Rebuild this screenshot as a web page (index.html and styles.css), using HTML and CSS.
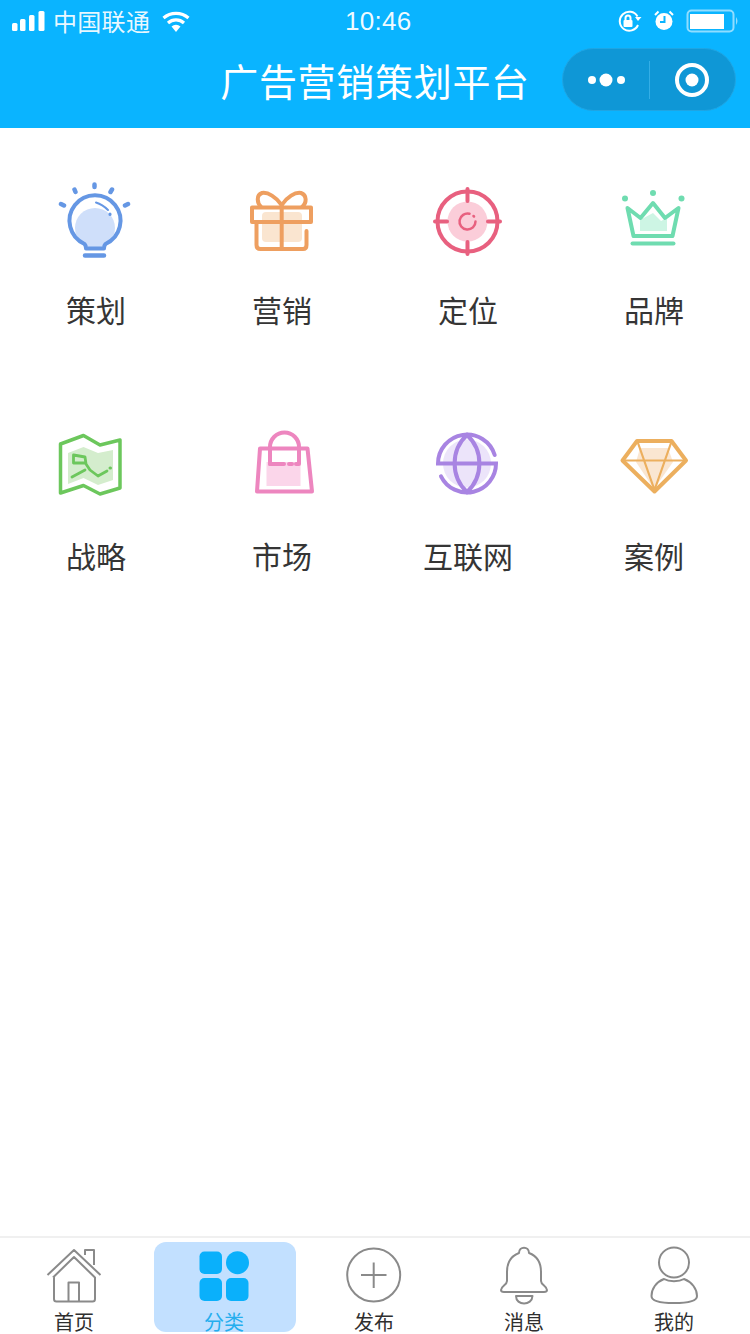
FILE: index.html
```html
<!DOCTYPE html>
<html lang="zh-CN">
<head>
<meta charset="utf-8">
<title>广告营销策划平台</title>
<link rel="stylesheet" href="styles.css">
</head>
<body>
<div class="app">
  <header class="header">
    <div class="status">
      <div class="status-left">
        <svg class="signal" width="34" height="22" viewBox="12 9 34 22"><rect x="12" y="22" width="5.5" height="8" rx="1.5"/><rect x="20" y="18" width="5.5" height="12" rx="1.5"/><rect x="29" y="14" width="5.5" height="16" rx="1.5"/><rect x="38.5" y="10" width="6" height="20" rx="1.5"/></svg>
        <span class="carrier">中国联通</span>
        <svg class="wifi" width="30" height="22" viewBox="162 9 30 22"><path class="wifi-arc" d="M164.5 17 A19 19 0 0 1 189.5 17"/><path class="wifi-arc" d="M169 22 A12 12 0 0 1 185 22"/><path class="wifi-dot" d="M172.5 25.5 A7 7 0 0 1 181.5 25.5 L177 31 Z"/></svg>
      </div>
      <span class="time">10:46</span>
      <div class="status-right">
        <svg class="lock" width="24" height="22" viewBox="619 9 24 22"><path class="thin" d="M639 24 A9.5 9.5 0 1 1 638.5 15.5"/><path class="solid" d="M636 16 L642.5 16 L639 20 Z"/><rect class="solid" x="624.5" y="19" width="9" height="7" rx="1"/><path class="thin" d="M626.5 19 V17 A2.5 2.5 0 0 1 631.5 17 V19"/></svg>
        <svg class="alarm" width="22" height="22" viewBox="653 9 22 22"><circle class="solid" cx="664" cy="20.5" r="8.5"/><path class="hand" d="M664.5 15 V21 H660"/><path class="thin" d="M655 14 L658.5 10.5 M673 14 L669.5 10.5"/></svg>
        <svg class="battery" width="54" height="24" viewBox="686 8 54 24"><rect class="batt-case" x="687.5" y="9.5" width="46" height="21" rx="4"/><rect class="solid" x="690" y="13" width="34" height="15"/><path class="batt-tip" d="M736 16 Q739 20 736 24 Z"/></svg>
      </div>
    </div>
    <div class="nav">
      <h1 class="title">广告营销策划平台</h1>
      <div class="capsule">
        <div class="capsule-part">
          <svg width="40" height="20" viewBox="587 70 40 20"><circle class="solid" cx="593" cy="80" r="4"/><circle class="solid" cx="607" cy="80" r="6.5"/><circle class="solid" cx="622" cy="80" r="4"/></svg>
        </div>
        <div class="capsule-part">
          <svg width="40" height="40" viewBox="672 60 40 40"><circle class="ring" cx="692" cy="80" r="15"/><circle class="solid" cx="692" cy="80" r="6.5"/></svg>
        </div>
      </div>
    </div>
  </header>

  <main class="grid">
    <a class="cell">
      <svg class="icon" viewBox="56 180 80 80">
        <circle fill="#cfdffa" cx="95" cy="228" r="20"/>
        <g fill="none" stroke="#6597e4" stroke-width="4" stroke-linecap="round" stroke-linejoin="round">
          <path d="M84.500 244 A25.500 25.500 0 1 1 105.500 244 C104.500 245 104 246.500 104 248.500 H86 C86 246.500 85.500 245 84.500 244 Z"/>
          <path stroke-width="4.500" d="M85 255.500 H104 M94.500 184.500 V187 M74.500 189.500 L75.500 192 M110.500 192 L112 189.500 M61 204 L64 205.500 M125 205.500 L128 204"/>
          <path stroke-width="2" d="M96 202.500 C101 204 105 207 108 210"/>
          <path stroke-width="3" d="M110 214 V214.500"/>
        </g>
      </svg>
      <span class="label">策划</span>
    </a>
    <a class="cell">
      <svg class="icon" viewBox="242 180 80 80">
        <rect fill="#fae5d0" x="262" y="212" width="40" height="30" rx="4"/>
        <g fill="none" stroke="#ee9f60" stroke-width="4" stroke-linecap="round" stroke-linejoin="round">
          <path d="M252 207.500 H311 V222 H252 Z"/>
          <path d="M256.500 222 V245 Q256.500 249 260.500 249 H303 Q306.500 249 306.500 245 V231"/>
          <path d="M281.700 207.500 V249"/>
          <path d="M281.700 205 C276 197 268 192 262 193 C256 195 257 203 261 207"/>
          <path d="M281.700 205 C287 197 295 192 301 193 C307 195 307 203 302 207"/>
        </g>
      </svg>
      <span class="label">营销</span>
    </a>
    <a class="cell">
      <svg class="icon" viewBox="428 180 80 80">
        <circle fill="#fbcdd9" cx="467.500" cy="221.500" r="20"/>
        <g fill="none" stroke="#e8607f" stroke-linecap="round">
          <circle stroke-width="4" cx="467.500" cy="221.500" r="30"/>
          <path stroke-width="4" d="M467.500 189 V201 M467.500 242 V254 M435 221.500 H447 M488 221.500 H500"/>
          <path stroke-width="2.500" d="M469.500 213.800 A8 8 0 1 0 475.500 221.500"/>
          <path stroke-width="2.500" d="M473.500 216 L474 216.500"/>
        </g>
      </svg>
      <span class="label">定位</span>
    </a>
    <a class="cell">
      <svg class="icon" viewBox="614 180 80 80">
        <path fill="#cdf5e4" d="M640 220 L653 213 L661 221 L667 218 V231 H640 Z"/>
        <g fill="none" stroke="#6fdcb0" stroke-linecap="round" stroke-linejoin="round">
          <path stroke-width="4" d="M627.500 208 L640.500 218 L653 203 L665 218 L678.500 208 L672.500 236 H633.500 Z"/>
          <path stroke-width="4" d="M632.500 243.500 H673.500"/>
        </g>
        <g fill="#6fdcb0"><circle cx="625" cy="198.500" r="3"/><circle cx="653" cy="193" r="3"/><circle cx="681.500" cy="198.500" r="3"/></g>
      </svg>
      <span class="label">品牌</span>
    </a>
    <a class="cell">
      <svg class="icon" viewBox="56 426 80 80">
        <path fill="#d4edcd" d="M68 453 L83.500 447 L98 453 L113 450 V480 L98 485 L83.500 478 L68 484 Z"/>
        <g fill="none" stroke="#6cc75c" stroke-linecap="round" stroke-linejoin="round">
          <path stroke-width="3.500" d="M60.500 444 L83.500 435.500 L100 445 L120 440 V488 L100 494 L83.500 485.500 L60.500 493 Z"/>
          <path stroke-width="2.800" d="M73.500 455 V463 H85 M73.500 455 L85 457 L86 464 L90 470 L98 476 L107 471 M72 477 L85 470"/>
          <path stroke-width="3" d="M110 468 H110.500"/>
        </g>
      </svg>
      <span class="label">战略</span>
    </a>
    <a class="cell">
      <svg class="icon" viewBox="242 426 80 80">
        <rect fill="#fbd6ea" x="266.500" y="462" width="34" height="24"/>
        <g fill="none" stroke="#ed86bf" stroke-width="4" stroke-linecap="round" stroke-linejoin="round">
          <path d="M260 448.500 H307.500 L312 491.500 H257 Z"/>
          <path d="M270 464 V447 A14.500 14.500 0 0 1 299 447 V464 H296"/>
          <path d="M270 464 H284 M289 464 H292"/>
        </g>
      </svg>
      <span class="label">市场</span>
    </a>
    <a class="cell">
      <svg class="icon" viewBox="428 426 80 80">
        <circle fill="#ece4fa" cx="467" cy="463.500" r="24"/>
        <g fill="none" stroke="#a884e2" stroke-width="4" stroke-linecap="round">
          <path d="M494.700 455 A29 29 0 0 0 438 463.500 H496 A29 29 0 0 1 441 476.300"/>
          <path d="M467 435 C450.500 450 450.500 477 467 492 C483.500 477 483.500 450 467 435 Z"/>
        </g>
      </svg>
      <span class="label">互联网</span>
    </a>
    <a class="cell">
      <svg class="icon" viewBox="614 426 80 80">
        <path fill="#fae6d1" d="M640 448 H668 L673 462 L654 489 L636 462 Z"/>
        <g fill="none" stroke="#ecaf5e" stroke-linecap="round" stroke-linejoin="round">
          <path stroke-width="4" d="M637 441 H671.500 L686 460.500 L654.500 491.500 L622.500 460.500 Z"/>
          <path stroke-width="2.200" d="M622.500 460.500 H686 M638 443 L654.500 490 L671 443"/>
        </g>
      </svg>
      <span class="label">案例</span>
    </a>
  </main>

  <nav class="tabbar">
    <a class="tab">
      <svg class="tab-icon" viewBox="44 1246 60 60"><path d="M47.500 1275 L74 1250 L100.500 1275 M53 1277.500 L74 1257 L95 1277.500 M54 1277 V1299 Q54 1301.500 56.500 1301.500 H92.500 Q95 1301.500 95 1299 V1277 M68.500 1301.500 V1282.500 H79 V1301.500 M85 1255 V1250 H94 V1265"/></svg>
      <span class="tab-label">首页</span>
    </a>
    <a class="tab tab-active">
      <svg class="tab-icon" viewBox="194 1246 60 60"><g class="tab-fill"><rect x="199.500" y="1251.500" width="22.500" height="22.500" rx="5"/><circle cx="237.500" cy="1262.700" r="11.500"/><rect x="199.500" y="1278" width="22.500" height="23" rx="5"/><rect x="226" y="1278" width="22.500" height="23" rx="5"/></g></svg>
      <span class="tab-label">分类</span>
    </a>
    <a class="tab">
      <svg class="tab-icon" viewBox="344 1246 60 60"><circle cx="373.700" cy="1275" r="26.500"/><path d="M373.700 1262.500 V1288 M361 1275 H386.500"/></svg>
      <span class="tab-label">发布</span>
    </a>
    <a class="tab">
      <svg class="tab-icon" viewBox="494 1246 60 60"><path d="M519 1253 C519 1246 529 1246 529 1253 C537 1256 541 1263 541 1272 V1281 C541 1285 547 1286 547 1290 Q547 1292 544 1292 H504 Q501 1292 501 1290 C501 1286 507 1285 507 1281 V1272 C507 1263 511 1256 519 1253 Z M516 1296 H532.500 C532 1306 516 1306 516 1296 Z"/></svg>
      <span class="tab-label">消息</span>
    </a>
    <a class="tab">
      <svg class="tab-icon" viewBox="644 1246 60 60"><circle cx="674" cy="1262.500" r="15"/><path d="M664 1279 C669 1282 679 1282 684 1279 C692 1282 697 1289 697 1296 C697 1301 688 1303 674 1303 C660 1303 651.500 1301 651.500 1296 C651.500 1289 656 1282 664 1279 Z"/></svg>
      <span class="tab-label">我的</span>
    </a>
  </nav>
</div>
</body>
</html>
```
FILE: styles.css
```css
* { box-sizing: border-box; }

html, body {
  margin: 0;
  padding: 0;
  background: #fff;
}

.app {
  width: 750px;
  height: 1334px;
  display: flex;
  flex-direction: column;
  font-family: "Noto Sans CJK SC", "Noto Sans", sans-serif;
  color: #333;
}

.header {
  background: #0ab4ff;
  color: #fff;
  height: 128px;
  flex: none;
}

.status {
  height: 40px;
  display: grid;
  grid-template-columns: 333px auto 1fr;
  align-items: center;
  padding-left: 12px;
}

.status-left {
  display: flex;
  align-items: center;
}

.signal { fill: #fff; }

.carrier {
  font-size: 24px;
  line-height: 40px;
  margin-left: 7px;
  letter-spacing: 0.3px;
  color: rgba(255, 255, 255, 0.92);
}

.wifi { margin-left: 11px; }

.wifi-arc {
  fill: none;
  stroke: #fff;
  stroke-width: 3.2;
}

.wifi-dot { fill: #fff; }

.time {
  font-family: "Liberation Sans", Arial, sans-serif;
  font-size: 26px;
  line-height: 42px;
  letter-spacing: 0.3px;
  color: rgba(255, 255, 255, 0.95);
}

.status-right {
  display: flex;
  align-items: center;
  justify-content: flex-end;
  padding-right: 10px;
}

.solid { fill: #fff; }

.thin {
  fill: none;
  stroke: #fff;
  stroke-width: 2;
}

.hand {
  fill: none;
  stroke: #0ab4ff;
  stroke-width: 2;
}

.lock { margin-right: 11px; }
.alarm { margin-right: 11px; }

.batt-case {
  fill: none;
  stroke: rgba(255, 255, 255, 0.55);
  stroke-width: 2;
}

.batt-tip { fill: rgba(255, 255, 255, 0.55); }

.nav {
  position: relative;
  height: 88px;
  display: flex;
  align-items: center;
  justify-content: center;
}

.title {
  margin: 0 0 8px;
  font-size: 38px;
  font-weight: 400;
  line-height: 60px;
  letter-spacing: 0.7px;
}

.capsule {
  position: absolute;
  left: 562px;
  top: 8px;
  width: 174px;
  height: 63px;
  border-radius: 32px;
  background: #0f97d6;
  border: 1px solid #1fa5e3;
  display: flex;
  align-items: center;
}

.capsule-part {
  flex: 1;
  height: 38px;
  display: flex;
  align-items: center;
  justify-content: center;
}

.capsule-part + .capsule-part { border-left: 1px solid #34aee6; }

.ring {
  fill: none;
  stroke: #fff;
  stroke-width: 4;
}

.grid {
  flex: 1;
  display: grid;
  grid-template-columns: repeat(4, 186px);
  grid-auto-rows: 149px;
  row-gap: 97px;
  align-content: start;
  padding: 52px 3px 0;
}

.cell {
  display: flex;
  flex-direction: column;
  align-items: center;
}

.icon {
  width: 80px;
  height: 80px;
  display: block;
}

.label {
  margin-top: 29px;
  font-size: 30px;
  line-height: 40px;
  color: #353535;
  white-space: nowrap;
}

.tabbar {
  flex: none;
  height: 98px;
  display: grid;
  grid-template-columns: repeat(5, 150px);
  border-top: 2px solid #f0f0f0;
  background: #fff;
}

.tab {
  height: 90px;
  margin: 4px 4px 0;
  padding-right: 2px;
  border-radius: 12px;
  display: flex;
  flex-direction: column;
  align-items: center;
}

.tab-active { background: #c2e0ff; }

.tab-icon {
  width: 60px;
  height: 60px;
  margin-top: 4px;
  flex: none;
  fill: none;
  stroke: #8a8a8a;
  stroke-width: 2;
  stroke-linejoin: round;
}

.tab-fill {
  fill: #0ab0fb;
  stroke: none;
}

.tab-label {
  margin-top: 5px;
  font-size: 20px;
  line-height: 22px;
  color: #2f2f2f;
  white-space: nowrap;
}

.tab-active .tab-label { color: #25aeee; }
```
